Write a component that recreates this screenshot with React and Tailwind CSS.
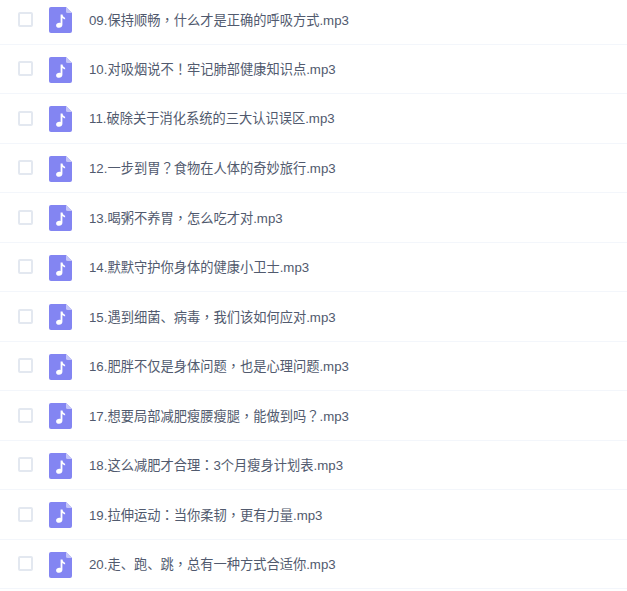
const names = [
  "09.保持顺畅，什么才是正确的呼吸方式.mp3",
  "10.对吸烟说不！牢记肺部健康知识点.mp3",
  "11.破除关于消化系统的三大认识误区.mp3",
  "12.一步到胃？食物在人体的奇妙旅行.mp3",
  "13.喝粥不养胃，怎么吃才对.mp3",
  "14.默默守护你身体的健康小卫士.mp3",
  "15.遇到细菌、病毒，我们该如何应对.mp3",
  "16.肥胖不仅是身体问题，也是心理问题.mp3",
  "17.想要局部减肥瘦腰瘦腿，能做到吗？.mp3",
  "18.这么减肥才合理：3个月瘦身计划表.mp3",
  "19.拉伸运动：当你柔韧，更有力量.mp3",
  "20.走、跑、跳，总有一种方式合适你.mp3",
];

function FileIcon() {
  return (
    <svg width="23" height="26" viewBox="0 0 23 26" className="shrink-0">
      <path d="M2 0H17L23 6V24a2 2 0 0 1-2 2H2a2 2 0 0 1-2-2V2a2 2 0 0 1 2-2Z" fill="#8385f2" />
      <path d="M17 0L23 6H18.5A1.5 1.5 0 0 1 17 4.5Z" fill="#c3c4f9" />
      <path d="M11.6 7.5h1.9c.2 1.6 1 2.5 2.6 3.2v1.7c-1.1-.2-2-.7-2.7-1.3v6.6c0 1.8-1.500 3-3.300 3s-3-.9-3-2.300 1.400-2.600 3.200-2.600c.5 0 .9.100 1.300.200Z" fill="#ffffff" />
    </svg>
  );
}

function Label({ text }) {
  return text.split(/([，！？：])/).map((part, i) =>
    i % 2 ? (
      <span key={i} className="font-['Noto_Sans_CJK_TC',sans-serif]">{part}</span>
    ) : (
      part
    )
  );
}

export default function App() {
  return (
    <div className="w-[627px] h-[591px] overflow-hidden bg-white">
      <ul className="-mt-[5px] font-['Liberation_Sans','Noto_Sans_CJK_SC',sans-serif] text-[13.25px] text-[#515a6e]">
        {names.map((n) => (
          <li key={n} className="flex h-[49.5px] items-center border-b border-[#f3f6fb] pl-[18px] pt-[2px]">
            <span className="mb-[2px] h-[15px] w-[15px] shrink-0 rounded-[2px] border-2 border-[#e3e8f0] bg-white" />
            <span className="ml-4 flex"><FileIcon /></span>
            <span className="ml-[17px] whitespace-nowrap"><Label text={n} /></span>
          </li>
        ))}
      </ul>
    </div>
  );
}
